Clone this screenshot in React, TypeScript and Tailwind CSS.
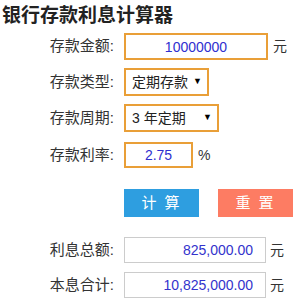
import { useState } from 'react';

const FONT = "font-['Liberation_Sans','Noto_Sans_CJK_SC',sans-serif]";

function Label({ text }: { text: string }) {
  return <div className="w-[115px] shrink-0 text-right text-[15px] text-[#333] pr-[1px]">{text}</div>;
}

function Arrow() {
  return (
    <span className="pointer-events-none absolute right-[7px] top-1/2 -translate-y-1/2 text-[9px] text-black">▼</span>
  );
}

export default function App() {
  const [amount, setAmount] = useState('10000000');
  const [type, setType] = useState('定期存款');
  const [term, setTerm] = useState('3 年定期');
  const [rate, setRate] = useState('2.75');

  return (
    <div className={`w-[296px] h-[303px] bg-white ${FONT}`}>
      <h3 className="pl-[2px] text-[19px] leading-[28px] font-bold text-[#222] font-['Noto_Sans_CJK_SC',sans-serif]">
        银行存款利息计算器
      </h3>

      <div className="flex flex-col">
        <div className="mt-[5px] flex items-center gap-[9px]">
          <Label text="存款金额:" />
          <input
            value={amount}
            onChange={e => setAmount(e.target.value)}
            className="w-[144px] h-[27px] border-2 border-[#e99f38] text-center text-[14px] text-[#2f2fcf] outline-none"
          />
          <span className="ml-[-4px] text-[14px] text-[#333]">元</span>
        </div>

        <div className="mt-[8px] flex items-center gap-[9px]">
          <Label text="存款类型:" />
          <div className="relative">
            <select
              value={type}
              onChange={e => setType(e.target.value)}
              className="appearance-none w-[85px] h-[28px] border-2 border-[#e99f38] pl-[6px] text-[14px] text-[#222] bg-white outline-none"
            >
              <option>定期存款</option>
              <option>活期存款</option>
            </select>
            <Arrow />
          </div>
        </div>

        <div className="mt-[8px] flex items-center gap-[9px]">
          <Label text="存款周期:" />
          <div className="relative">
            <select
              value={term}
              onChange={e => setTerm(e.target.value)}
              className="appearance-none w-[95px] h-[28px] border-2 border-[#e99f38] pl-[6px] text-[14px] text-[#222] bg-white outline-none"
            >
              <option>1 年定期</option>
              <option>2 年定期</option>
              <option>3 年定期</option>
              <option>5 年定期</option>
            </select>
            <Arrow />
          </div>
        </div>

        <div className="mt-[10px] flex items-center gap-[9px]">
          <Label text="存款利率:" />
          <input
            value={rate}
            onChange={e => setRate(e.target.value)}
            className="w-[69px] h-[26px] border-2 border-[#e99f38] text-center text-[14px] text-[#2f2fcf] outline-none"
          />
          <span className="ml-[-4px] text-[14px] text-[#333]">%</span>
        </div>

        <div className="mt-[21px] flex items-center pl-[124px] gap-[19px]">
          <button className="w-[75px] h-[28px] bg-[#2e9ee0] text-white text-[15px] tracking-[2px]">计 算</button>
          <button className="w-[75px] h-[28px] bg-[#fd7c63] text-white text-[15px] tracking-[2px]">重 置</button>
        </div>

        <div className="mt-[20px] flex items-center gap-[9px]">
          <Label text="利息总额:" />
          <input
            readOnly
            value="825,000.00"
            className="w-[142px] h-[26px] border border-[#cccccc] text-right pr-[12px] text-[14px] text-[#3333cc] outline-none"
          />
          <span className="ml-[-5px] text-[14px] text-[#333]">元</span>
        </div>

        <div className="mt-[9px] flex items-center gap-[9px]">
          <Label text="本息合计:" />
          <input
            readOnly
            value="10,825,000.00"
            className="w-[142px] h-[26px] border border-[#cccccc] text-right pr-[12px] text-[14px] text-[#3333cc] outline-none"
          />
          <span className="ml-[-5px] text-[14px] text-[#333]">元</span>
        </div>
      </div>
    </div>
  );
}
